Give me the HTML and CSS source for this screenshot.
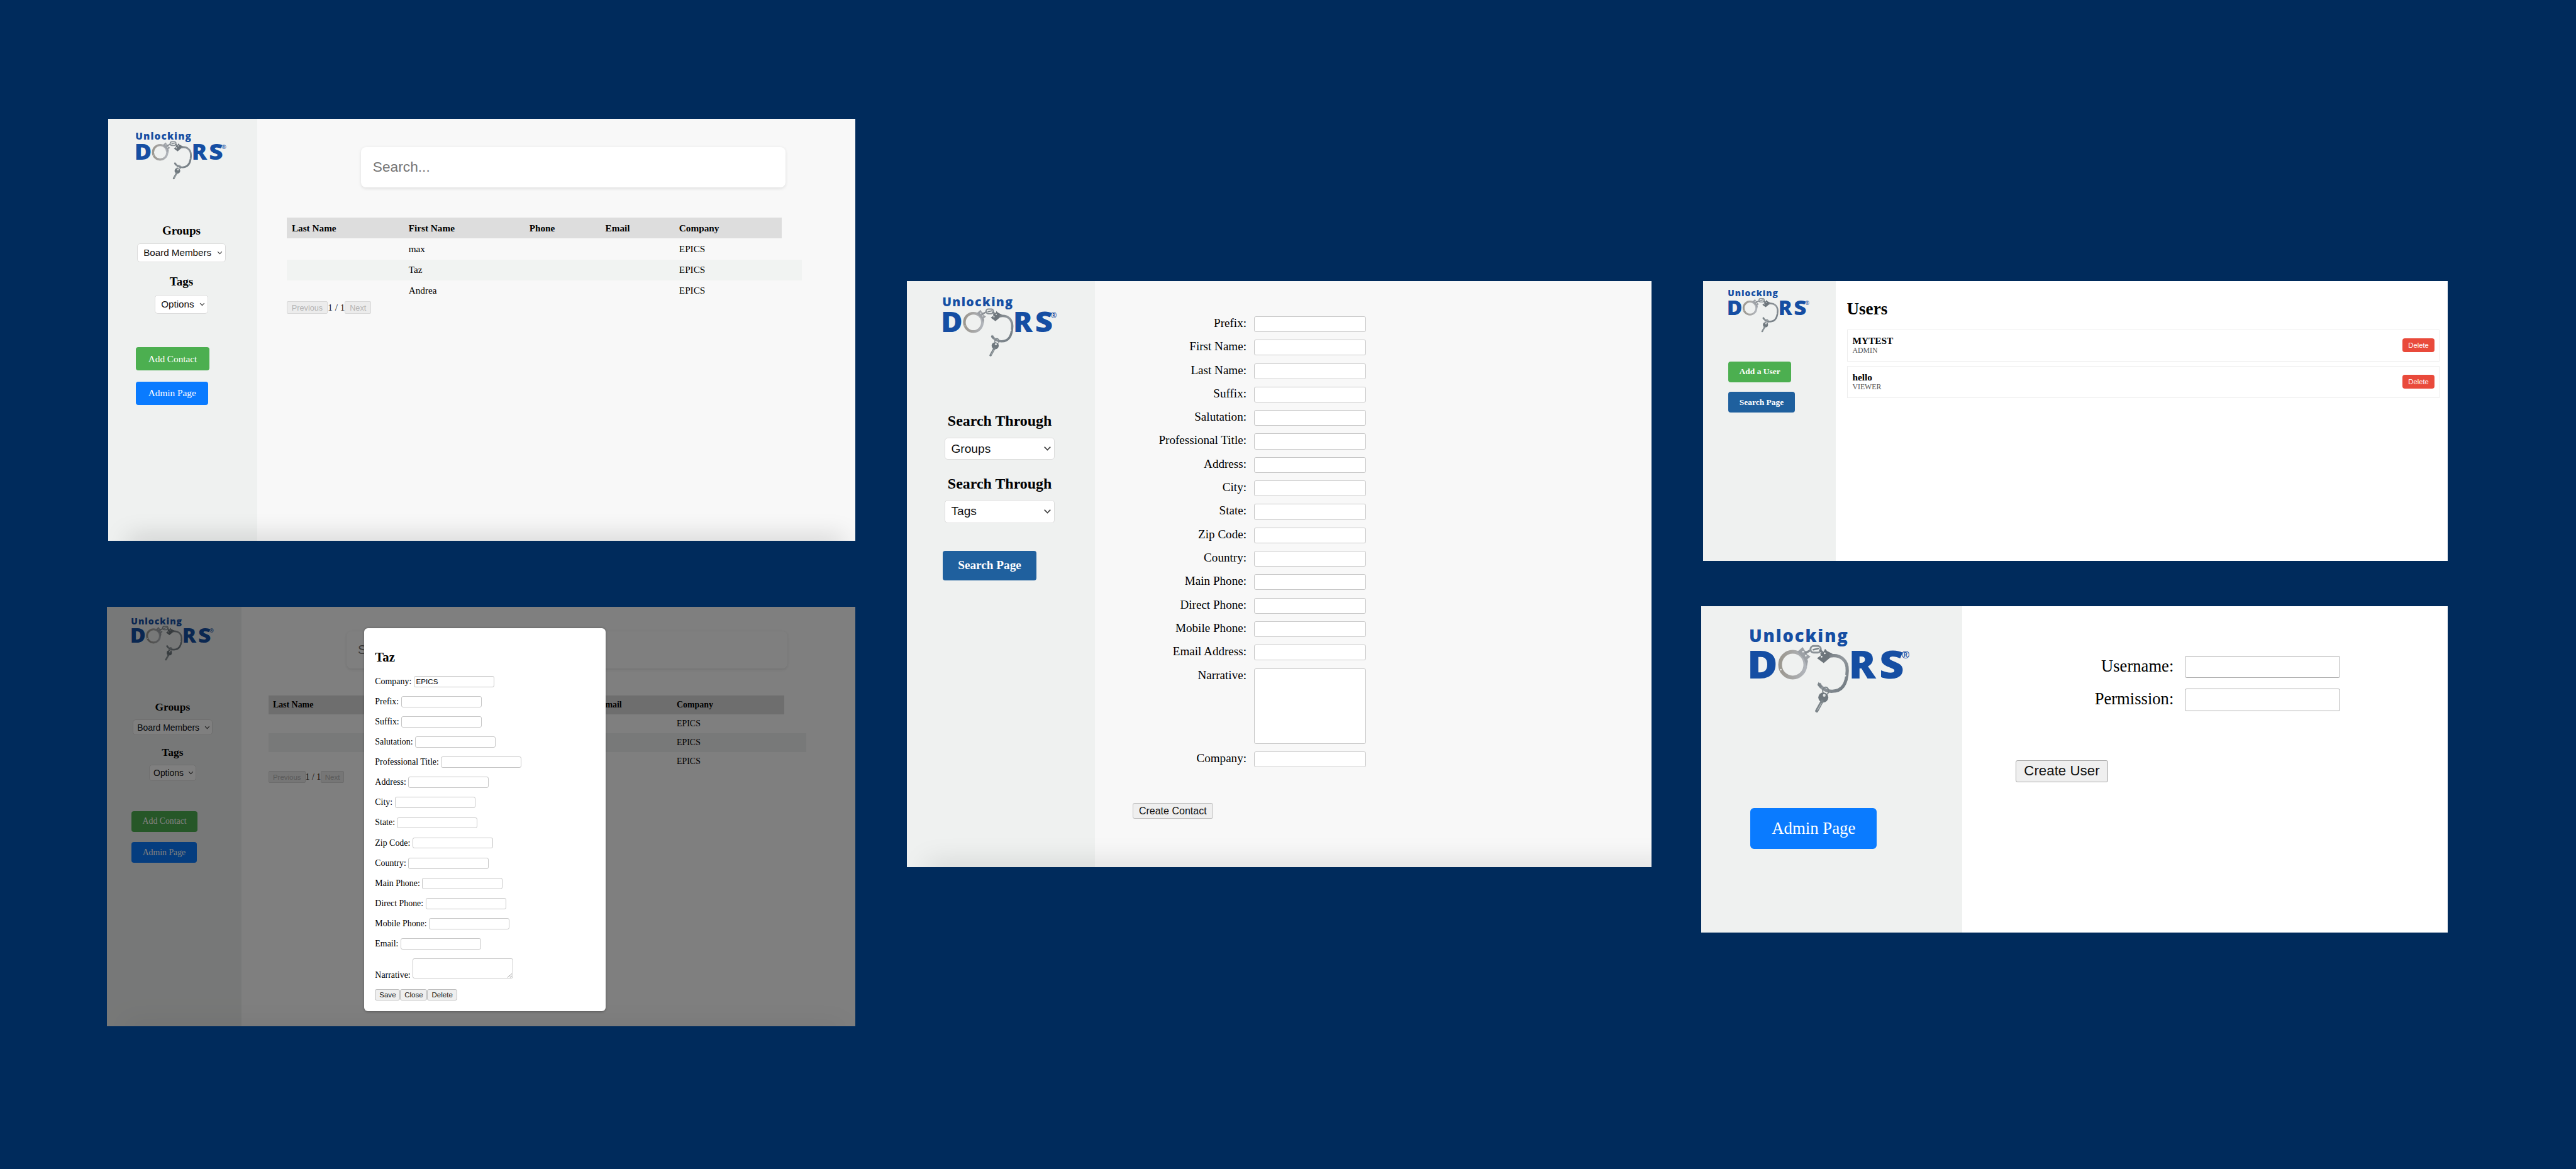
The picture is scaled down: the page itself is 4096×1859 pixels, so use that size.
FILE: index.html
```html
<!DOCTYPE html>
<html lang="en">
<head>
<meta charset="utf-8">
<title>Unlocking Doors</title>
<link rel="stylesheet" href="styles.css">
</head>
<body>
<svg width="0" height="0" class="defs" aria-hidden="true">
  <defs>
    <linearGradient id="silver" x1="0" y1="0" x2="1" y2="0">
      <stop offset="0" stop-color="#9b978f"/><stop offset="1" stop-color="#b1b5bb"/>
    </linearGradient>
    <linearGradient id="steel" x1="0" y1="0" x2="1" y2="1">
      <stop offset="0" stop-color="#6a7278"/><stop offset=".45" stop-color="#93999e"/><stop offset="1" stop-color="#6d777e"/>
    </linearGradient>
    <symbol id="logo" viewBox="0 0 255 134">
      <g class="logo-text">
        <text x="-2" y="20.8" font-size="27.5" textLength="158" lengthAdjust="spacing">Unlocking</text>
        <text x="-5" y="79.2" font-size="62" textLength="49" lengthAdjust="spacingAndGlyphs">D</text>
        <text x="157.5" y="79.2" font-size="62" textLength="43.5" lengthAdjust="spacingAndGlyphs">R</text>
        <text x="206.5" y="79.2" font-size="62" textLength="40" lengthAdjust="spacingAndGlyphs">S</text>
        <text class="logo-reg" x="242" y="47.5" font-size="17" textLength="13.5" lengthAdjust="spacingAndGlyphs">®</text>
      </g>
      <ellipse cx="68" cy="57.4" rx="20.2" ry="20.6" fill="none" stroke="url(#silver)" stroke-width="6"/>
      <path d="M75.5 36.6 84 29.2 87.5 35 91 36 90 40 96.5 44.5 91.5 48.5 92.5 52 90.5 60 86 48Z" fill="#9da1a6"/>
      <circle cx="84.5" cy="36.6" r="1.3" fill="#eff1f0"/><circle cx="89" cy="43" r="1.3" fill="#eff1f0"/>
      <path d="M89 38.5 96 34.5" stroke="#8b9095" stroke-width="3.4" stroke-linecap="round"/>
      <rect x="96.5" y="27.5" width="16.5" height="10.5" rx="5" fill="none" stroke="#8b9297" stroke-width="3"/>
      <path d="M101 33.5 109 31.5" stroke="#7c8489" stroke-width="2.6" stroke-linecap="round"/>
      <path d="M112 34.5 118 39.5" stroke="#788086" stroke-width="3.6" stroke-linecap="round"/>
      <path d="M119.8 32 123 35.5 132.8 40.5 128 46 117.6 54.8 107 47 113 42.5 112 39 117 38Z" fill="#6d757b"/>
      <circle cx="119.3" cy="39.2" r="1.4" fill="#eff1f0"/><circle cx="114.2" cy="44.8" r="1.4" fill="#eff1f0"/>
      <path d="M127 43.6C145 40 156 51 155.3 67C154.600 88 148 99.600 131.500 100C121 100.200 113 94.500 110 87.500" fill="none" stroke="url(#steel)" stroke-width="5.200"/>
      <path d="M107.500 90 109.500 85 115 92.500 112 95Z" fill="#7b8489"/>
      <circle cx="152.300" cy="75" r="1.200" fill="#eff1f0"/><circle cx="49" cy="65.500" r="1.200" fill="#eff1f0"/>
      <ellipse cx="120.800" cy="99.500" rx="4.800" ry="6" fill="none" stroke="#7c858a" stroke-width="2"/>
      <circle cx="117" cy="110" r="8" fill="#6f787e"/>
      <circle cx="118.500" cy="106.500" r="2.200" fill="#dfe2e2"/>
      <path d="M115 116 106.500 131.500" stroke="#7b8489" stroke-width="5" stroke-linecap="round"/>
      <path d="M114 119 107.500 130.500" stroke="#b5babd" stroke-width="1.200"/>
    </symbol>
    <symbol id="chevron" viewBox="0 0 12 8">
      <path d="M1.500 1.500 6 6.200 10.500 1.500" fill="none" stroke="currentColor" stroke-width="1.700"/>
    </symbol>
  </defs>
</svg>

<main class="board">

  <section class="window contacts">
    <aside class="sidebar">
      <svg class="logo"><use href="#logo"/></svg>
      <h3 class="first">Groups</h3>
      <div class="select">Board Members<svg class="chev"><use href="#chevron"/></svg></div>
      <h3>Tags</h3>
      <div class="select short">Options<svg class="chev"><use href="#chevron"/></svg></div>
      <a class="btn green">Add Contact</a>
      <a class="btn blue">Admin Page</a>
    </aside>
    <div class="content">
      <div class="search">Search...</div>
      <table>
        <colgroup><col class="c1"><col class="c2"><col class="c3"><col class="c4"><col class="c5"><col class="c6"></colgroup>
        <thead><tr><th>Last Name</th><th>First Name</th><th>Phone</th><th>Email</th><th>Company</th></tr></thead>
        <tbody>
          <tr><td></td><td>max</td><td></td><td></td><td>EPICS</td><td></td></tr>
          <tr class="alt"><td></td><td>Taz</td><td></td><td></td><td>EPICS</td><td></td></tr>
          <tr><td></td><td>Andrea</td><td></td><td></td><td>EPICS</td><td></td></tr>
        </tbody>
      </table>
      <div class="pager"><span class="pg prev">Previous</span><span class="count">1 / 1</span><span class="pg next">Next</span></div>
    </div>
  </section>

  <section class="window contacts detail">
    <aside class="sidebar">
      <svg class="logo"><use href="#logo"/></svg>
      <h3 class="first">Groups</h3>
      <div class="select">Board Members<svg class="chev"><use href="#chevron"/></svg></div>
      <h3>Tags</h3>
      <div class="select short">Options<svg class="chev"><use href="#chevron"/></svg></div>
      <a class="btn green">Add Contact</a>
      <a class="btn blue">Admin Page</a>
    </aside>
    <div class="content">
      <div class="search">S</div>
      <table>
        <colgroup><col class="c1"><col class="c2"><col class="c3"><col class="c4"><col class="c5"><col class="c6"></colgroup>
        <thead><tr><th>Last Name</th><th></th><th></th><th>Email</th><th>Company</th></tr></thead>
        <tbody>
          <tr><td></td><td></td><td></td><td></td><td>EPICS</td><td></td></tr>
          <tr class="alt"><td></td><td></td><td></td><td></td><td>EPICS</td><td></td></tr>
          <tr><td></td><td></td><td></td><td></td><td>EPICS</td><td></td></tr>
        </tbody>
      </table>
      <div class="pager"><span class="pg prev">Previous</span><span class="count">1 / 1</span><span class="pg next">Next</span></div>
    </div>
    <div class="overlay">
      <div class="modal">
        <h2>Taz</h2>
        <div class="line">Company:<span class="field">EPICS</span></div>
        <div class="line">Prefix:<span class="field"></span></div>
        <div class="line">Suffix:<span class="field"></span></div>
        <div class="line">Salutation:<span class="field"></span></div>
        <div class="line">Professional Title:<span class="field"></span></div>
        <div class="line">Address:<span class="field"></span></div>
        <div class="line">City:<span class="field"></span></div>
        <div class="line">State:<span class="field"></span></div>
        <div class="line">Zip Code:<span class="field"></span></div>
        <div class="line">Country:<span class="field"></span></div>
        <div class="line">Main Phone:<span class="field"></span></div>
        <div class="line">Direct Phone:<span class="field"></span></div>
        <div class="line">Mobile Phone:<span class="field"></span></div>
        <div class="line">Email:<span class="field"></span></div>
        <div class="line notes">Narrative:<span class="field area"><svg class="grip" viewBox="0 0 9 8"><path d="M.5 7.500 8.500.5M5 7.500 8.500 4.500" fill="none" stroke="#888" stroke-width="1"/></svg></span></div>
        <div class="actions"><span class="native save">Save</span><span class="native close">Close</span><span class="native del">Delete</span></div>
      </div>
    </div>
  </section>

  <section class="window create">
    <aside class="sidebar">
      <svg class="logo"><use href="#logo"/></svg>
      <h3 class="first">Search Through</h3>
      <div class="select">Groups<svg class="chev"><use href="#chevron"/></svg></div>
      <h3>Search Through</h3>
      <div class="select tall">Tags<svg class="chev"><use href="#chevron"/></svg></div>
      <a class="btn navy">Search Page</a>
    </aside>
    <div class="content">
      <div class="form">
        <label>Prefix:</label><span class="field"></span>
        <label>First Name:</label><span class="field"></span>
        <label>Last Name:</label><span class="field"></span>
        <label>Suffix:</label><span class="field"></span>
        <label>Salutation:</label><span class="field"></span>
        <label>Professional Title:</label><span class="field"></span>
        <label>Address:</label><span class="field"></span>
        <label>City:</label><span class="field"></span>
        <label>State:</label><span class="field"></span>
        <label>Zip Code:</label><span class="field"></span>
        <label>Country:</label><span class="field"></span>
        <label>Main Phone:</label><span class="field"></span>
        <label>Direct Phone:</label><span class="field"></span>
        <label>Mobile Phone:</label><span class="field"></span>
        <label>Email Address:</label><span class="field"></span>
        <label>Narrative:</label><span class="field area"></span>
        <label>Company:</label><span class="field"></span>
      </div>
      <span class="native">Create Contact</span>
    </div>
  </section>

  <section class="window users">
    <aside class="sidebar">
      <svg class="logo"><use href="#logo"/></svg>
      <a class="btn green">Add a User</a>
      <a class="btn navy">Search Page</a>
    </aside>
    <div class="content">
      <h1>Users</h1>
      <div class="user"><div><div class="name">MYTEST</div><div class="role">ADMIN</div></div><span class="delete">Delete</span></div>
      <div class="user"><div><div class="name">hello</div><div class="role">VIEWER</div></div><span class="delete">Delete</span></div>
    </div>
  </section>

  <section class="window newuser">
    <aside class="sidebar">
      <svg class="logo"><use href="#logo"/></svg>
      <a class="btn blue">Admin Page</a>
    </aside>
    <div class="content">
      <div class="form">
        <label>Username:</label><span class="field"></span>
        <label>Permission:</label><span class="field"></span>
      </div>
      <span class="native">Create User</span>
    </div>
  </section>

</main>
</body>
</html>
```
FILE: styles.css
```css
* { box-sizing: border-box; }
html, body { margin: 0; height: 100%; overflow: hidden; background: #002b5c; }
body { font-family: "Liberation Serif", "Times New Roman", serif; color: #000; }
.defs { position: absolute; }
h1, h2, h3 { margin: 0; font-weight: bold; white-space: nowrap; }

.board { position: relative; width: 4125px; height: 1872px; zoom: 0.99297; }

.window { position: absolute; display: flex; overflow: hidden; background: #fff; }
.sidebar { flex: none; display: flex; flex-direction: column; align-items: center; background: #eff1f0; }
.content { flex: 1; min-width: 0; }
.logo { flex: none; display: block; align-self: flex-start; overflow: visible; }
.logo-text { font-family: "Open Sans", "Noto Sans", sans-serif; font-weight: 800; fill: #154ea3; }
.logo-reg { font-weight: 600; }

.select {
  flex: none; display: flex; align-items: center; justify-content: space-between;
  background: #fff; border: 1px solid #dcdcdc; border-radius: 5px;
  font-family: "Liberation Sans", Arial, sans-serif; color: #111; white-space: nowrap;
}
.chev { flex: none; color: #444; }
.btn {
  flex: none; align-self: flex-start; display: flex; align-items: center; justify-content: center;
  color: #fff; border-radius: 4px; white-space: nowrap;
}
.green { background: #4caf50; }
.blue { background: #0a7bff; }
.navy { background: #1f609e; font-weight: bold; }

.field { display: block; background: #fff; border: 1.500px solid #c6c6c6; border-radius: 3px; }
.native {
  display: flex; align-items: center; justify-content: center; background: #efefef;
  border: 1.500px solid #bdbdbd; border-radius: 3px; color: #111; white-space: nowrap;
  font-family: "Liberation Sans", Arial, sans-serif;
}

/* Contact list */
.contacts { left: 173px; top: 190px; width: 1197px; height: 676px; background: #f8f8f8; }
.contacts .sidebar { width: 239px; padding: 21px 49px 0 45px; }
.contacts .logo { width: 145px; height: 75.700px; }
.contacts h3 { font-size: 19.200px; line-height: 24px; margin-top: 18.900px; }
.contacts h3.first { margin-top: 70.500px; }
.contacts .select { width: 141.500px; height: 30.700px; margin-top: 8.100px; padding: 0 3.500px 0 9px; font-size: 15.300px; }
.contacts .select.short { width: 85px; height: 30px; margin-top: 9.400px; }
.contacts .chev { width: 9px; height: 6px; }
.contacts .btn { height: 37.300px; font-size: 15.400px; }
.contacts .btn.green { width: 117px; margin-top: 53.700px; }
.contacts .btn.blue { width: 115.500px; margin-top: 17.700px; }
.search {
  width: 680px; height: 64.300px; margin: 45.700px 0 0 166px; padding-left: 19px; display: flex; align-items: center;
  background: #fff; border-radius: 8px; box-shadow: 0 2px 5px rgba(0, 0, 0, .1);
  font: 22.900px "Liberation Sans", Arial, sans-serif; color: #757575;
}
.contacts table { table-layout: fixed; width: 825px; margin: 48.700px 0 0 47px; border-collapse: collapse; font-size: 15.360px; }
.c1 { width: 187.100px; } .c2 { width: 193.400px; } .c3 { width: 121.700px; }
.c4 { width: 118.100px; } .c5 { width: 172.500px; } .c6 { width: 32.200px; }
.contacts tr { height: 33.400px; }
.contacts th, .contacts td { padding: 0 0 0 8.200px; text-align: left; vertical-align: middle; line-height: 20px; }
.contacts th { background: #ddd; }
.alt { background: #f1f3f2; }
.pager { display: flex; align-items: center; margin: 0 0 0 47px; height: 20.500px; font-size: 15.360px; }
.pg {
  display: flex; align-items: center; justify-content: center; height: 100%;
  border: 1.200px solid #d8d8d8; border-radius: 2px; background: #ececec; color: #b4b4b4;
  font: 12.800px "Liberation Sans", Arial, sans-serif;
}
.prev { width: 66px; }
.next { width: 42px; }
.count { width: 27.300px; text-align: center; white-space: nowrap; color: #222; }

.contacts::after, .create::after {
  content: ""; position: absolute; left: 34px; right: 22px; bottom: -12px; height: 12px;
  box-shadow: 0 0 40px 2px rgba(0, 0, 0, .27);
}
.create::after { right: -40px; box-shadow: 0 0 44px 2px rgba(0, 0, 0, .22); }

/* Contact detail with modal */
.detail { left: 171px; top: 972px; width: 1199px; height: 672px; background: #fff; }
.detail::after { opacity: .35; }
.detail .sidebar { width: 215.300px; padding: 17.300px 44px 0 39.300px; }
.detail .logo { width: 132px; height: 69px; }
.detail h3 { font-size: 17.500px; margin-top: 16.100px; }
.detail h3.first { margin-top: 63.100px; }
.detail .select { width: 128px; height: 25.700px; margin-top: 6.600px; padding: 0 3px 0 6.500px; font-size: 14px; }
.detail .select.short { width: 76px; height: 25.700px; margin-top: 6.900px; }
.detail .btn { height: 33.300px; font-size: 13.900px; }
.detail .btn.green { width: 106.300px; margin-top: 48.600px; }
.detail .btn.blue { width: 105px; margin-top: 16.400px; }
.detail .search { width: 706px; height: 60px; margin: 38.700px 0 0 168.700px; padding-left: 18px; font-size: 21px; }
.detail table { width: 860.600px; margin: 43.300px 0 0 43.700px; font-size: 14px; }
.detail .c1 { width: 195px; } .detail .c2 { width: 201px; } .detail .c3 { width: 127px; }
.detail .c4 { width: 123.700px; } .detail .c5 { width: 179.300px; } .detail .c6 { width: 34.600px; }
.detail tr { height: 30.300px; }
.detail th, .detail td { padding-left: 7px; }
.detail .pager { margin: 0 0 0 43.700px; height: 19px; font-size: 14px; }
.detail .pg { font-size: 11.600px; }
.detail .prev { width: 59px; }
.detail .next { width: 37.400px; }
.detail .count { width: 24.700px; }
.overlay { position: absolute; inset: 0; z-index: 1; background: rgba(0, 0, 0, .5); }
.modal {
  position: absolute; left: 412px; top: 34px; width: 386.400px; height: 613.200px;
  padding: 35px 17.600px 0; background: #fff; border-radius: 6px; box-shadow: 0 1px 4px rgba(0, 0, 0, .3);
}
.modal h2 { font-size: 21px; line-height: 24px; margin-bottom: 17.600px; }
.line { display: flex; align-items: center; gap: 3.400px; height: 18px; margin-bottom: 14.320px; font-size: 14px; white-space: nowrap; }
.line .field { width: 129px; height: 18px; border-width: 1px; padding-left: 3px; font: 11.700px/16px "Liberation Sans", Arial, sans-serif; }
.notes { align-items: flex-end; height: 32.400px; margin-bottom: 17.300px; line-height: 10px; }
.notes .area { width: 161px; height: 32.400px; display: flex; align-items: flex-end; justify-content: flex-end; }
.grip { width: 9px; height: 7px; }
.actions { display: flex; height: 18px; }
.actions .native { font-size: 11.650px; border-width: 1px; }
.save { width: 40.400px; }
.close { width: 43.300px; }
.del { width: 47.700px; }

/* Create contact */
.create { left: 1452px; top: 450px; width: 1193px; height: 939px; background: #f8f8f8; }
.create .sidebar { width: 301.300px; padding: 25.300px 60.900px 0 57.400px; }
.create .logo { width: 183px; height: 95.500px; }
.create h3 { font-size: 24.100px; line-height: 30px; margin-top: 24.200px; }
.create h3.first { margin-top: 88.900px; }
.create .select { width: 176.500px; height: 34.700px; margin-top: 11.700px; padding: 0 4px 0 9.500px; font-size: 19.300px; }
.create .select.tall { height: 37px; margin-top: 10.500px; }
.create .chev { width: 13px; height: 8.500px; }
.create .btn { width: 150.600px; height: 46.700px; margin-top: 44.600px; font-size: 19.400px; }
.form { display: grid; width: max-content; }
.form label { text-align: right; white-space: nowrap; }
.create .form { grid-template-columns: 182.800px 179.400px; column-gap: 12.300px; row-gap: 12.300px; margin: 56.500px 0 0 60px; }
.create label { font-size: 19.250px; line-height: 22.500px; }
.create .field { height: 25.300px; }
.create .area { height: 121px; }
.create .native { width: 129.400px; height: 25.200px; margin: 57px 0 0 60px; font-size: 16.150px; }

/* User list */
.users { left: 2727px; top: 450px; width: 1193px; height: 448px; }
.users .sidebar { width: 213px; padding: 14.300px 42px 0 40.300px; }
.users .logo { width: 130px; height: 68px; }
.users .btn { font-size: 13.600px; font-weight: bold; }
.users .btn.green { width: 101.300px; height: 33.300px; margin-top: 46.400px; }
.users .btn.navy { width: 107px; height: 33px; margin-top: 15.700px; }
.users .content { padding: 29px 13.500px 0 17.300px; }
.users h1 { font-size: 27.300px; line-height: 32px; margin-bottom: 16.300px; }
.user {
  display: flex; align-items: center; justify-content: space-between; height: 51.300px; margin-bottom: 7.400px;
  padding: 0 7.500px 0 8px; border: 1.500px solid #eee;
}
.name { font-size: 15.500px; font-weight: bold; line-height: 17px; }
.role { font-size: 11.900px; line-height: 14px; color: #555; }
.delete {
  display: flex; align-items: center; justify-content: center; width: 50.500px; height: 22px;
  border-radius: 4px; background: #e94a3b; color: #fff; font: 11.300px "Liberation Sans", Arial, sans-serif;
}

/* Create user */
.newuser { left: 2724px; top: 971px; width: 1196px; height: 522px; }
.newuser .sidebar { width: 418.200px; padding: 36px 84px 0 79px; }
.newuser .logo { width: 255px; height: 134px; }
.newuser .btn { width: 202.500px; height: 65px; margin-top: 153.600px; font-size: 27px; border-radius: 6px; }
.newuser .form { grid-template-columns: 253.400px 248.700px; column-gap: 17.900px; row-gap: 16.700px; margin: 79px 0 0 85.200px; }
.newuser label { font-size: 26.800px; line-height: 33px; }
.newuser .field { height: 36px; border-color: #ababab; }
.newuser .native { width: 148.600px; height: 35.700px; margin: 78.500px 0 0 85.200px; font-size: 22.500px; border-color: #a8a8a8; }
```
